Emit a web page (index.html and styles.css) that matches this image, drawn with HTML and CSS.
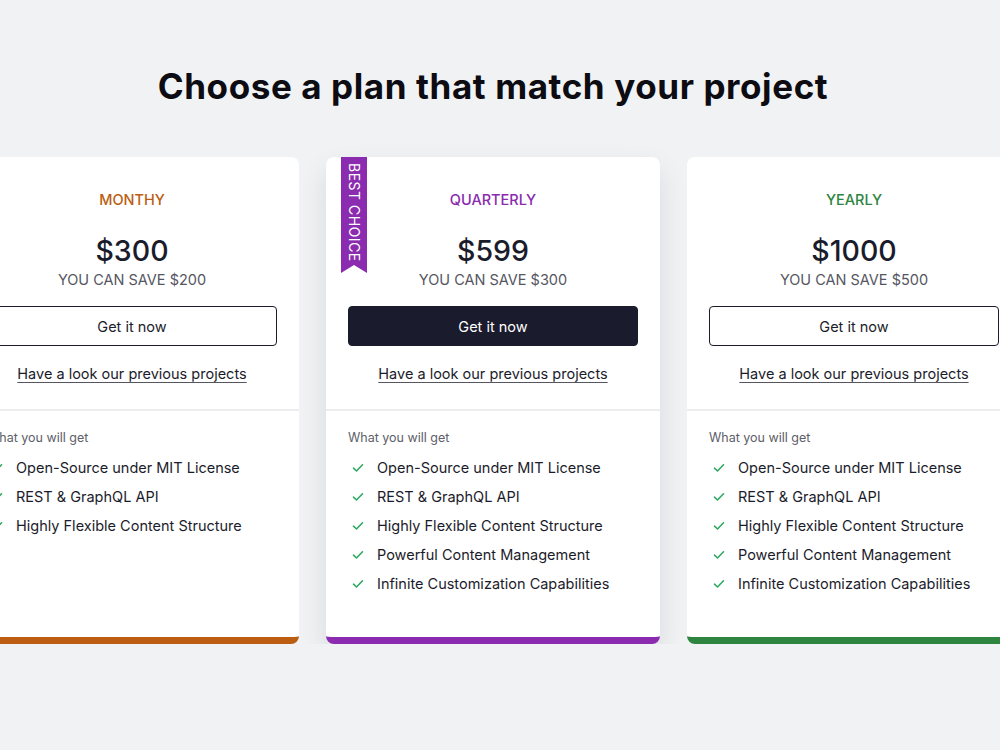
FILE: index.html
```html
<!DOCTYPE html>
<html lang="en">
<head>
    <meta charset="UTF-8">
    <meta name="viewport" content="width=device-width, initial-scale=1.0">
    <title>Pricing Plans</title>
    <link rel="stylesheet" href="styles.css">
</head>
<body>
    <div class="page">
        <h1 class="title">Choose a plan that match your project</h1>

        <div class="plans">
            <div class="plan monthly">
                <div class="plan-head">
                    <div class="plan-name">MONTHY</div>
                    <div class="plan-price">$300</div>
                    <div class="plan-save">YOU CAN SAVE $200</div>
                    <button class="btn">Get it now</button>
                    <a class="plan-link" href="#">Have a look our previous projects</a>
                </div>
                <div class="plan-body">
                    <div class="plan-caption">What you will get</div>
                    <ul class="features">
                        <li><svg class="check" viewBox="0 0 12 10"><path d="M1.5 5.2 4.5 8 10.5 1.8"/></svg>Open-Source under MIT License</li>
                        <li><svg class="check" viewBox="0 0 12 10"><path d="M1.5 5.2 4.5 8 10.5 1.8"/></svg>REST &amp; GraphQL API</li>
                        <li><svg class="check" viewBox="0 0 12 10"><path d="M1.5 5.2 4.5 8 10.5 1.8"/></svg>Highly Flexible Content Structure</li>
                    </ul>
                </div>
            </div>

            <div class="plan quarterly featured">
                <div class="ribbon">BEST CHOICE</div>
                <div class="plan-head">
                    <div class="plan-name">QUARTERLY</div>
                    <div class="plan-price">$599</div>
                    <div class="plan-save">YOU CAN SAVE $300</div>
                    <button class="btn btn-dark">Get it now</button>
                    <a class="plan-link" href="#">Have a look our previous projects</a>
                </div>
                <div class="plan-body">
                    <div class="plan-caption">What you will get</div>
                    <ul class="features">
                        <li><svg class="check" viewBox="0 0 12 10"><path d="M1.5 5.2 4.5 8 10.5 1.8"/></svg>Open-Source under MIT License</li>
                        <li><svg class="check" viewBox="0 0 12 10"><path d="M1.5 5.2 4.5 8 10.5 1.8"/></svg>REST &amp; GraphQL API</li>
                        <li><svg class="check" viewBox="0 0 12 10"><path d="M1.5 5.2 4.5 8 10.5 1.8"/></svg>Highly Flexible Content Structure</li>
                        <li><svg class="check" viewBox="0 0 12 10"><path d="M1.5 5.2 4.5 8 10.5 1.8"/></svg>Powerful Content Management</li>
                        <li><svg class="check" viewBox="0 0 12 10"><path d="M1.5 5.2 4.5 8 10.5 1.8"/></svg>Infinite Customization Capabilities</li>
                    </ul>
                </div>
            </div>

            <div class="plan yearly">
                <div class="plan-head">
                    <div class="plan-name">YEARLY</div>
                    <div class="plan-price">$1000</div>
                    <div class="plan-save">YOU CAN SAVE $500</div>
                    <button class="btn">Get it now</button>
                    <a class="plan-link" href="#">Have a look our previous projects</a>
                </div>
                <div class="plan-body">
                    <div class="plan-caption">What you will get</div>
                    <ul class="features">
                        <li><svg class="check" viewBox="0 0 12 10"><path d="M1.5 5.2 4.5 8 10.5 1.8"/></svg>Open-Source under MIT License</li>
                        <li><svg class="check" viewBox="0 0 12 10"><path d="M1.5 5.2 4.5 8 10.5 1.8"/></svg>REST &amp; GraphQL API</li>
                        <li><svg class="check" viewBox="0 0 12 10"><path d="M1.5 5.2 4.5 8 10.5 1.8"/></svg>Highly Flexible Content Structure</li>
                        <li><svg class="check" viewBox="0 0 12 10"><path d="M1.5 5.2 4.5 8 10.5 1.8"/></svg>Powerful Content Management</li>
                        <li><svg class="check" viewBox="0 0 12 10"><path d="M1.5 5.2 4.5 8 10.5 1.8"/></svg>Infinite Customization Capabilities</li>
                    </ul>
                </div>
            </div>
        </div>
    </div>
</body>
</html>
```

FILE: styles.css
```css
body {
    margin: 0;
    background-color: #f1f2f4;
    font-family: Inter, "Noto Sans", Arial, sans-serif;
    color: #1b1c2b;
    overflow: hidden;
}

.page {
    padding-top: 63px;
    padding-right: 14px;
}

.title {
    margin: 0;
    text-align: center;
    font-size: 35px;
    line-height: 46px;
    font-weight: 700;
    color: #0c0c12;
    letter-spacing: 0.6px;
}

.plans {
    display: flex;
    justify-content: center;
    gap: 27px;
    margin-top: 48px;
}

.plan {
    position: relative;
    flex: 0 0 334px;
    display: flex;
    flex-direction: column;
    height: 480px;
    background-color: #ffffff;
    border-radius: 8px;
    border-bottom: 7px solid;
}

.monthly {
    border-bottom-color: #bb5e12;
}

.quarterly {
    border-bottom-color: #8a2bb0;
}

.yearly {
    border-bottom-color: #2e8540;
}

.featured {
    box-shadow: 0 12px 28px rgba(20, 20, 40, 0.10);
}

/* Ribbon */
.ribbon {
    position: absolute;
    top: 0;
    left: 15px;
    width: 26px;
    height: 116px;
    padding-top: 6px;
    box-sizing: border-box;
    background-color: #8a2bb0;
    color: #ffffff;
    font-size: 14px;
    letter-spacing: 0.5px;
    writing-mode: vertical-rl;
    display: flex;
    align-items: center;
    line-height: 26px;
    clip-path: polygon(0 0, 100% 0, 100% 100%, 50% 93%, 0 100%);
}

/* Card head */
.plan-head {
    display: flex;
    flex-direction: column;
    align-items: center;
    padding: 34px 22px 25px;
    border-bottom: 2px solid #ededf0;
}

.plan-name {
    font-size: 14.5px;
    line-height: 18px;
    font-weight: 500;
}

.monthly .plan-name {
    color: #bb5e12;
}

.quarterly .plan-name {
    color: #8a2bb0;
}

.yearly .plan-name {
    color: #2e8540;
}

.plan-price {
    margin-top: 24px;
    font-size: 28.5px;
    line-height: 36px;
    font-weight: 500;
    color: #1b1c2b;
}

.plan-save {
    margin-top: 1px;
    font-size: 14.5px;
    line-height: 20px;
    color: #555661;
}

.btn {
    width: 100%;
    height: 40px;
    margin-top: 16px;
    background-color: #ffffff;
    border: 1px solid #1b1c2b;
    border-radius: 4px;
    font-family: inherit;
    font-size: 14.5px;
    color: #1b1c2b;
    cursor: pointer;
}

.btn-dark {
    background-color: #1a1b2d;
    color: #ffffff;
}

.plan-link {
    margin-top: 18px;
    font-size: 14.5px;
    line-height: 20px;
    color: #1b1c2b;
    text-decoration: underline;
    text-decoration-color: #555661;
    text-underline-offset: 3px;
}

/* Card body */
.plan-body {
    flex: 1;
    padding: 18px 22px 0;
}

.plan-caption {
    font-size: 12.5px;
    line-height: 18px;
    color: #5d5e68;
}

.features {
    list-style: none;
    margin: 11px 0 0;
    padding: 0;
}

.features li {
    display: flex;
    align-items: center;
    font-size: 14.5px;
    line-height: 20px;
    margin-bottom: 9px;
    color: #1b1c2b;
}

.check {
    width: 12px;
    height: 10px;
    margin-left: 4px;
    margin-right: 13px;
    fill: none;
    stroke: #2fa862;
    stroke-width: 1.6;
    stroke-linecap: round;
    stroke-linejoin: round;
}
```
